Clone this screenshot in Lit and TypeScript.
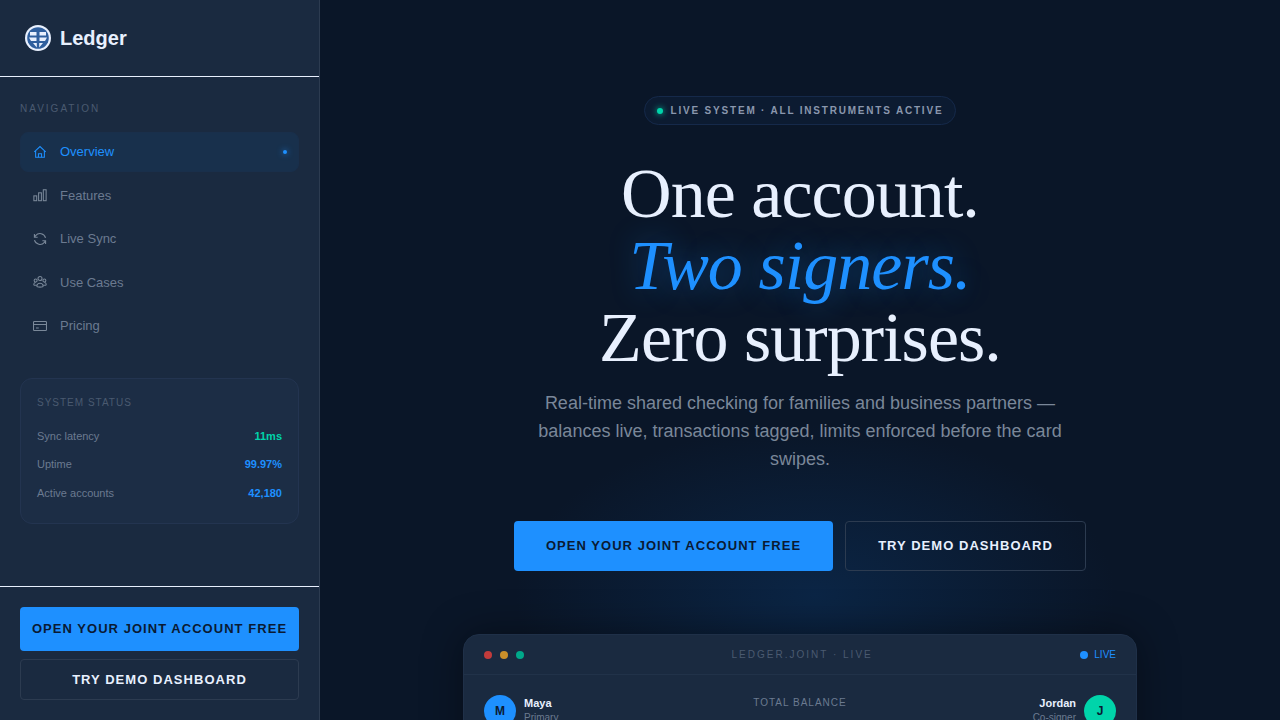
import { LitElement, html, css, svg } from "lit";
import { customElement } from "lit/decorators.js";

const icons: Record<string, unknown> = {
  home: svg`<path d="M1.500 7.800 8 1.800l6.500 6M3 6.600V14h10V6.600"/><path d="M6.200 14v-4h3.600v4"/>`,
  bars: svg`<rect x="1" y="9" width="3.200" height="5.500"/><rect x="6.400" y="5.500" width="3.200" height="9"/><rect x="11.800" y="2" width="3.200" height="12.500"/>`,
  sync: svg`<path d="M14.300 6.600A6.500 6.500 0 0 0 3 4.200L1.600 5.900M1.600 2.200v3.700h3.700"/><path d="M1.700 9.400a6.500 6.500 0 0 0 11.300 2.400l1.400-1.700M14.400 13.800v-3.700h-3.700"/>`,
  users: svg`<circle cx="8" cy="4" r="2.300"/><circle cx="3" cy="6.300" r="1.700"/><circle cx="13" cy="6.300" r="1.700"/><path d="M4.500 12.800c0-4.600 7-4.600 7 0 0 1.400-7 1.400-7 0Z"/><path d="M4.500 11.800H2c-1.600 0-1.500-3 1-3.200M11.500 11.800H14c1.600 0 1.500-3-1-3.200"/>`,
  card: svg`<rect x="0.600" y="2.800" width="14.800" height="10.400" rx="1"/><path d="M0.600 6.200h14.800M3.400 10.300h3.200"/>`,
};

@customElement("app-root")
export class AppRoot extends LitElement {
  static styles = css`
    :host { display: block; width: 1280px; height: 720px; overflow: hidden; font-family: "Liberation Sans", Arial, sans-serif; background: #0a1628; }
    * { box-sizing: border-box; }
    .page { display: flex; width: 1280px; height: 720px; overflow: hidden; }
    .side { flex: 0 0 320px; height: 720px; background: #1a2a40; border-right: 1px solid #2c3b50; display: flex; flex-direction: column; }
    .brand { height: 77px; flex: none; border-bottom: 1px solid #e8f0fe; display: flex; align-items: center; gap: 9px; padding: 0 24px 0 25px; }
    .brand svg { width: 26px; height: 26px; display: block; }
    .brand span { font-size: 20px; font-weight: 700; color: #e8f0fe; }
    .navwrap { padding: 25px 20px 0; }
    .navlabel { font-size: 10px; line-height: 14px; letter-spacing: 2px; color: #4a5a70; margin-bottom: 16px; }
    .nav { display: flex; flex-direction: column; gap: 4px; }
    .item { height: 39.500px; display: flex; align-items: center; gap: 12px; padding: 0 11px; border-radius: 8px; font-size: 13px; color: #6b7a90; border: 1px solid transparent; }
    .item svg { width: 14px; height: 14px; margin: 0 1px; fill: none; stroke: #7a8899; stroke-width: 1.200; display: block; flex: none; }
    .item.active { background: #18304c; color: #1e90ff; border-color: #192f4b; }
    .item.active svg { stroke: #1e90ff; }
    .item .pip { width: 4px; height: 4px; border-radius: 50%; background: #1e90ff; margin-left: auto; margin-right: 0; box-shadow: 0 0 6px #1e90ff; }
    .status { margin: 32px 20px 0; height: 146px; border-radius: 12px; background: #1c2d45; border: 1px solid #233450; padding: 17px 16px 0; }
    .status h4 { margin: 0 0 19px; font-weight: 400; font-size: 10px; line-height: 14px; letter-spacing: 1px; color: #4a5a70; }
    .row { display: flex; justify-content: space-between; align-items: center; height: 14px; margin-bottom: 14.500px; font-size: 11px; color: #6b7a90; }
    .row b { font-size: 11px; color: #1e90ff; }
    .row b.g { color: #00d4aa; }
    .sidefoot { margin-top: auto; border-top: 1px solid #e8f0fe; padding: 20px; display: flex; flex-direction: column; gap: 8px; height: 134px; flex: none; }
    .btn { display: flex; align-items: center; justify-content: center; border-radius: 4px; font-weight: 700; letter-spacing: 1.040px; font-size: 13px; white-space: nowrap; flex: none; }
    .btn.p { background: #1e90ff; color: #0a1a33; }
    .btn.s { border: 1px solid #2c3b50; color: #e8f0fe; }
    .sidefoot .p { height: 44px; padding-bottom: 1px; }
    .sidefoot .s { height: 41px; }
    .main { flex: 1; height: 720px; position: relative; display: flex; flex-direction: column; align-items: center; padding-top: 96px; background: radial-gradient(ellipse 300px 170px at 495px 595px, #0b2545 0%, rgba(10, 22, 40, 0) 100%), #0a1628; overflow: hidden; }
    .pill { flex: none; display: flex; align-items: center; gap: 8px; height: 29px; border-radius: 15px; padding: 0 12px; background: #0c1b31; border: 1px solid #15294a; font-size: 10px; font-weight: 700; letter-spacing: 1.800px; color: #8a97ad; }
    .pill i { width: 6px; height: 6px; border-radius: 50%; background: #00d4aa; box-shadow: 0 0 6px #00d4aa; }
    h1 { flex: none; margin: 33px 0 0; text-align: center; font-family: "Liberation Serif", "Times New Roman", serif; font-weight: 400; font-size: 70px; line-height: 72px; letter-spacing: -0.950px; color: #e8f0fe; }
    h1 em { color: #1e90ff; text-shadow: 0 0 30px rgba(30, 144, 255, .4); }
    .lead { flex: none; margin: 15px 0 0; width: 560px; text-align: center; font-size: 18px; line-height: 28px; color: #7a8799; }
    .cta { flex: none; display: flex; gap: 12px; margin-top: 48px; }
    .cta .btn { height: 50px; padding-bottom: 1px; }
    .cta .p { width: 319px; }
    .cta .s { width: 241px; }
    .panel { margin-top: 63px; width: 674px; flex: none; height: 200px; background: #1a2a40; border: 1px solid #1f3048; border-radius: 16px; box-shadow: 0 0 40px rgba(0, 0, 0, .4); }
    .bar { height: 40px; display: flex; align-items: center; justify-content: space-between; padding: 0 20px; border-bottom: 1px solid #213249; font-size: 10px; color: #4a5a70; letter-spacing: 2px; }
    .dots { display: flex; gap: 8px; }
    .dots i { width: 8px; height: 8px; border-radius: 50%; }
    .live { display: flex; align-items: center; gap: 6px; color: #1e90ff; letter-spacing: 0; }
    .live i { width: 8px; height: 8px; border-radius: 50%; background: #1e90ff; }
    .body { display: flex; justify-content: space-between; padding: 20px 20px 0; }
    .who { display: flex; gap: 8px; width: 200px; }
    .who.r { justify-content: flex-end; text-align: right; }
    .av { width: 32px; height: 32px; border-radius: 50%; background: #1e90ff; color: #0a1a33; font-size: 12px; font-weight: 700; display: flex; align-items: center; justify-content: center; flex: none; }
    .av.g { background: #00d4aa; }
    .who b { display: block; font-size: 11px; line-height: 14px; color: #e8f0fe; margin-top: 1px; }
    .who small { display: block; font-size: 10px; line-height: 14px; margin-top: 1px; color: #6b7a90; }
    .total { font-size: 10px; line-height: 14px; letter-spacing: 1px; color: #6b7a90; margin-top: 1px; }
  `;

  render() {
    const items: [string, string][] = [["home", "Overview"], ["bars", "Features"], ["sync", "Live Sync"], ["users", "Use Cases"], ["card", "Pricing"]];
    return html`<div class="page">
      <aside class="side">
        <div class="brand">
          <svg viewBox="0 0 26 26"><circle cx="13" cy="13" r="13" fill="#e8f0fe"/><circle cx="13" cy="13" r="10.800" fill="#2f5f9e"/><path d="M5 7h6.500v3.500H5zM14.500 7H21v3.500h-6.500zM4 12.500h7.500V16H6zM14.500 12.500H22L20 16h-5.500z" fill="#e8f0fe"/><path d="M8 18h3.800v4.500zM14.200 18H18l-3.800 4.500z" fill="#e8f0fe"/></svg>
          <span>Ledger</span>
        </div>
        <div class="navwrap">
          <div class="navlabel">NAVIGATION</div>
          <div class="nav">
            ${items.map(([icon, label], i) => html`<div class="item ${i === 0 ? "active" : ""}">
              <svg viewBox="0 0 16 16">${icons[icon]}</svg><span>${label}</span>${i === 0 ? html`<span class="pip"></span>` : ""}
            </div>`)}
          </div>
        </div>
        <div class="status">
          <h4>SYSTEM STATUS</h4>
          <div class="row"><span>Sync latency</span><b class="g">11ms</b></div>
          <div class="row"><span>Uptime</span><b>99.97%</b></div>
          <div class="row"><span>Active accounts</span><b>42,180</b></div>
        </div>
        <div class="sidefoot">
          <div class="btn p">OPEN YOUR JOINT ACCOUNT FREE</div>
          <div class="btn s">TRY DEMO DASHBOARD</div>
        </div>
      </aside>
      <main class="main">
        <div class="pill"><i></i><span>LIVE SYSTEM · ALL INSTRUMENTS ACTIVE</span></div>
        <h1>One account.<br /><em>Two signers.</em><br />Zero surprises.</h1>
        <p class="lead">Real-time shared checking for families and business partners — balances live, transactions tagged, limits enforced before the card swipes.</p>
        <div class="cta">
          <div class="btn p">OPEN YOUR JOINT ACCOUNT FREE</div>
          <div class="btn s">TRY DEMO DASHBOARD</div>
        </div>
        <section class="panel">
          <div class="bar">
            <div class="dots"><i style="background:#c23b3b"></i><i style="background:#c98f2a"></i><i style="background:#00a88a"></i></div>
            <div class="title">LEDGER.JOINT · LIVE</div>
            <div class="live"><i></i>LIVE</div>
          </div>
          <div class="body">
            <div class="who"><div class="av">M</div><div><b>Maya</b><small>Primary</small></div></div>
            <div class="total">TOTAL BALANCE</div>
            <div class="who r"><div><b>Jordan</b><small>Co-signer</small></div><div class="av g">J</div></div>
          </div>
        </section>
      </main>
    </div>`;
  }
}
